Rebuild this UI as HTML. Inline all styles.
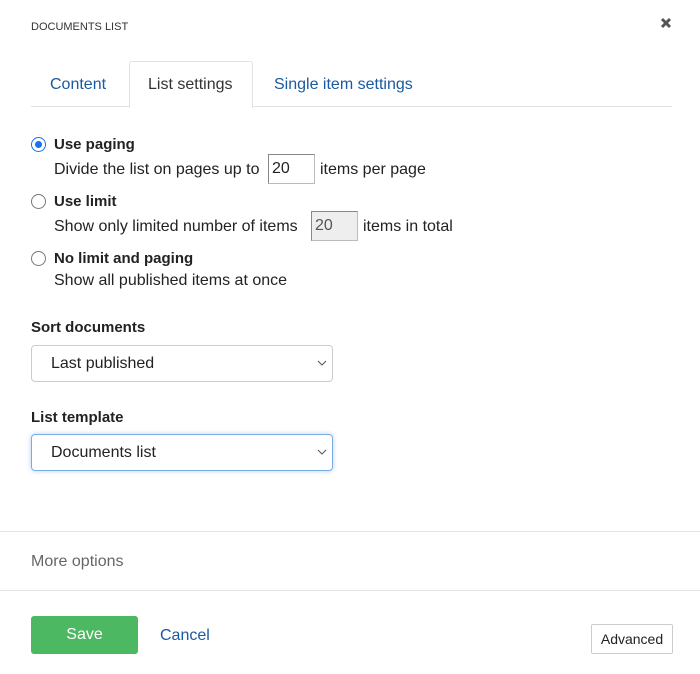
<!DOCTYPE html>
<html><head><meta charset="utf-8"><style>
*{margin:0;padding:0;box-sizing:border-box}
body{width:700px;height:674px;background:#fff;font-family:"Liberation Sans",sans-serif;color:#222;position:relative;overflow:hidden}
.a{position:absolute;white-space:nowrap}
.t{font-size:16px;line-height:20px}
.b{font-weight:bold;font-size:15px}
.radio{position:absolute;width:15px;height:15px;border:1px solid #777;border-radius:50%;background:#fff}
.radio.on{border:1.5px solid #1a73e8}
.radio.on:after{content:"";position:absolute;left:2.5px;top:2.5px;width:7px;height:7px;border-radius:50%;background:#1a73e8}
.inp{position:absolute;border:1px solid #bbb;border-top-color:#888;border-left-color:#888;font-size:16px;line-height:28px;padding-left:3px}
.sel{position:absolute;left:31px;width:302px;height:37px;border:1px solid #ccc;border-radius:4px;font-size:16px;line-height:35px;padding-left:19px}
.sel svg{position:absolute;right:5px;top:14px}
</style></head><body>
<div class="a" style="left:31px;top:21px;font-size:11px;color:#333">DOCUMENTS LIST</div>
<svg class="a" style="left:660px;top:17px" width="12" height="12" viewBox="0 0 12 12"><path d="M2 2L10 10M10 2L2 10" stroke="#555" stroke-width="3"/></svg>

<div class="a" style="left:31px;top:106px;width:641px;height:1px;background:#e2e2e2"></div>
<div class="a" style="left:129px;top:61px;width:124px;height:47px;border:1px solid #e2e2e2;border-bottom:none;background:#fff;border-radius:3px 3px 0 0"></div>
<div class="a t" style="left:50px;top:75px;color:#1a5aa0">Content</div>
<div class="a t" style="left:148px;top:75px;color:#333">List settings</div>
<div class="a t" style="left:274px;top:75px;color:#1a5aa0">Single item settings</div>

<div class="radio on" style="left:31px;top:137px"></div>
<div class="a t b" style="left:54px;top:135px">Use paging</div>
<div class="a t" style="left:54px;top:160px">Divide the list on pages up to</div>
<div class="inp" style="left:268px;top:154px;width:47px;height:30px">20</div>
<div class="a t" style="left:320px;top:160px">items per page</div>

<div class="radio" style="left:31px;top:194px"></div>
<div class="a t b" style="left:54px;top:192px">Use limit</div>
<div class="a t" style="left:54px;top:217px">Show only limited number of items</div>
<div class="inp" style="left:311px;top:211px;width:47px;height:30px;background:#eee;color:#555">20</div>
<div class="a t" style="left:363px;top:217px">items in total</div>

<div class="radio" style="left:31px;top:251px"></div>
<div class="a t b" style="left:54px;top:249px">No limit and paging</div>
<div class="a t" style="left:54px;top:271px">Show all published items at once</div>

<div class="a t b" style="left:31px;top:318px">Sort documents</div>
<div class="sel" style="top:345px">Last published<svg width="10" height="7" viewBox="0 0 10 7"><path d="M1 1L5 5L9 1" stroke="#555" fill="none"/></svg></div>
<div class="a t b" style="left:31px;top:408px">List template</div>
<div class="sel" style="top:434px;border-color:#7aaee0;box-shadow:0 0 5px rgba(80,150,230,.45)">Documents list<svg width="10" height="7" viewBox="0 0 10 7"><path d="M1 1L5 5L9 1" stroke="#555" fill="none"/></svg></div>

<div class="a" style="left:0;top:531px;width:700px;height:1px;background:#e4e4e4"></div>
<div class="a t" style="left:31px;top:552px;color:#666">More options</div>
<div class="a" style="left:0;top:590px;width:700px;height:1px;background:#e4e4e4"></div>

<div class="a" style="left:31px;top:616px;width:107px;height:38px;background:#4cb862;border-radius:3px;color:#fff;font-size:16px;line-height:38px;text-align:center">Save</div>
<div class="a t" style="left:160px;top:626px;color:#1a5aa0">Cancel</div>
<div class="a" style="left:591px;top:624px;width:82px;height:30px;border:1px solid #ccc;border-radius:2px;font-size:14px;line-height:28px;text-align:center">Advanced</div>
</body></html>
